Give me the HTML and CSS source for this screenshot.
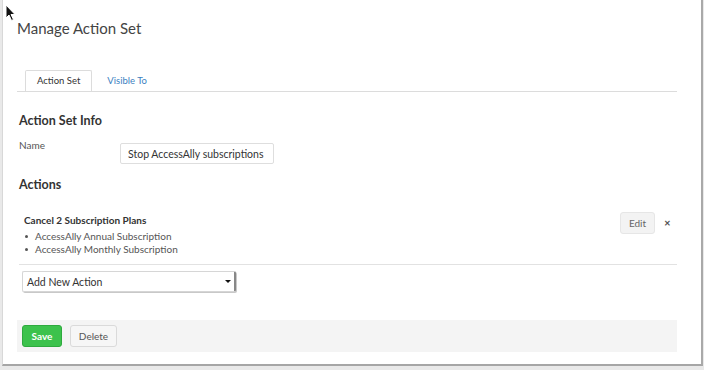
FILE: index.html
```html
<!DOCTYPE html>
<html lang="en">
<head>
    <meta charset="UTF-8">
    <title>Manage Action Set</title>
    <link rel="stylesheet" href="styles.css">
</head>
<body>

    <div class="dialog">
        <h1 class="title">Manage Action Set</h1>

        <div class="tabs">
            <a href="#" class="tab active">Action Set</a>
            <a href="#" class="tab">Visible To</a>
        </div>

        <div class="content">
            <h2 class="section">Action Set Info</h2>
            <div class="field">
                <label for="set-name">Name</label>
                <input type="text" id="set-name" value="Stop AccessAlly subscriptions">
            </div>

            <h2 class="section actions-head">Actions</h2>
            <div class="action">
                <div class="action-info">
                    <div class="action-name">Cancel 2 Subscription Plans</div>
                    <ul>
                        <li>AccessAlly Annual Subscription</li>
                        <li>AccessAlly Monthly Subscription</li>
                    </ul>
                </div>
                <button class="btn btn-edit">Edit</button>
                <span class="remove">&#x2715;</span>
            </div>

            <div class="add-row">
                <div class="select">
                    <span>Add New Action</span>
                    <span class="select-arrow"></span>
                </div>
            </div>
        </div>

        <div class="footer">
            <button class="btn btn-save">Save</button>
            <button class="btn btn-delete">Delete</button>
        </div>
    </div>

    <svg class="cursor" width="12" height="18" viewBox="0 0 12 18">
        <path d="M1 1 L1 14 L4 11 L6.5 16.5 L8.5 15.5 L6 10.5 L10 10.5 Z" fill="#111" stroke="#fff" stroke-width="1"/>
    </svg>

</body>
</html>
```

FILE: styles.css
```css
body {
    margin: 0;
    padding: 0;
    background-color: #e9e9e9;
    font-family: Lato, "Open Sans", Arial, sans-serif;
    color: #444;
    position: relative;
}
.dialog {
    margin: 0 1px 0 2px;
    height: 366px;
    box-sizing: border-box;
    background-color: #fff;
    border-left: 1px solid #d8d8d8;
    border-right: 2px solid #a9a9a9;
    border-bottom: 2px solid #a6a6a6;
    padding: 0 24px 0 14px;
}
.title {
    margin: 0;
    padding-top: 18px;
    font-size: 15px;
    line-height: 20px;
    font-weight: normal;
    color: #444;
}
.tabs {
    display: flex;
    margin-top: 32px;
    border-bottom: 1px solid #dcdcdc;
    padding-left: 8px;
    height: 21px;
}
.tab {
    font-size: 9.5px;
    line-height: 19px;
    text-decoration: none;
    color: #3b7fbf;
    padding: 0 12px;
    border: 1px solid transparent;
    border-bottom: none;
}
.tab.active {
    color: #333;
    background-color: #fff;
    border-color: #dcdcdc;
    border-radius: 2px 2px 0 0;
    margin-bottom: -1px;
    height: 21px;
    box-sizing: border-box;
    padding: 0 11px 0 11px;
}
.tab + .tab {
    margin-left: 2px;
}
.content {
    padding-left: 2px;
}
.section {
    margin: 0;
    font-size: 12.5px;
    line-height: 16px;
    font-weight: bold;
    color: #333;
}
.content > .section:first-child {
    margin-top: 21px;
}
.field {
    display: flex;
    margin-top: 9px;
}
.field label {
    width: 101px;
    font-size: 10px;
    line-height: 14px;
    color: #555;
}
.field input {
    margin-top: 5px;
    width: 154px;
    height: 21px;
    box-sizing: border-box;
    border: 1px solid #dedede;
    border-radius: 2px;
    padding: 0 7px;
    font-family: inherit;
    font-size: 10.5px;
    color: #333;
}
.actions-head {
    margin-top: 13px;
}
.action {
    display: flex;
    align-items: flex-start;
    margin-top: 15px;
    padding: 0 0 0 5px;
    border-bottom: 1px solid #e2e2e2;
    height: 56px;
}
.action-info {
    flex: 1;
}
.action-name {
    font-size: 10px;
    font-weight: bold;
    line-height: 14px;
    color: #333;
    margin-top: 5px;
}
.action ul {
    margin: 3px 0 0;
    padding: 0 0 0 11px;
    font-size: 10px;
    line-height: 13px;
    color: #555;
}
.action li {
    list-style: none;
    position: relative;
}
.action li::before {
    content: "";
    position: absolute;
    left: -10px;
    top: 5px;
    width: 3px;
    height: 3px;
    border-radius: 50%;
    background-color: #555;
}
.btn {
    font-family: inherit;
    font-size: 10px;
    border-radius: 3px;
    cursor: pointer;
}
.btn-edit {
    margin-top: 4px;
    width: 35px;
    height: 22px;
    padding: 0;
    background-color: #f3f3f3;
    border: 1px solid #e6e6e6;
    color: #666;
}
.remove {
    display: inline-block;
    width: 22px;
    box-sizing: border-box;
    padding-left: 9px;
    margin-top: 10px;
    font-size: 8px;
    font-weight: bold;
    color: #555;
}
.add-row {
    padding: 6px 0 0 3px;
}
.select {
    display: flex;
    justify-content: space-between;
    align-items: center;
    width: 214px;
    height: 21px;
    box-sizing: border-box;
    border: 1px solid #d6d6d6;
    border-right: 2px solid #888;
    border-radius: 2px;
    padding: 0 0 0 4px;
    font-size: 10.5px;
    color: #333;
    box-shadow: 1px 1px 0 #c8c8c8;
}
.select-arrow {
    width: 0;
    height: 0;
    margin-right: 3px;
    border-left: 3px solid transparent;
    border-right: 3px solid transparent;
    border-top: 3px solid #111;
}
.footer {
    display: flex;
    gap: 8px;
    margin-top: 28px;
    background-color: #f4f4f4;
    height: 32px;
    padding: 5px;
    box-sizing: border-box;
}
.btn-save {
    width: 40px;
    height: 22px;
    padding: 0;
    background-color: #3cc24c;
    border: 1px solid #2eaa3e;
    color: #fff;
    font-weight: bold;
}
.btn-delete {
    width: 47px;
    height: 22px;
    padding: 0;
    background-color: #f6f6f6;
    border: 1px solid #dadada;
    color: #555;
}
.cursor {
    position: absolute;
    left: 5px;
    top: 4px;
}
```
